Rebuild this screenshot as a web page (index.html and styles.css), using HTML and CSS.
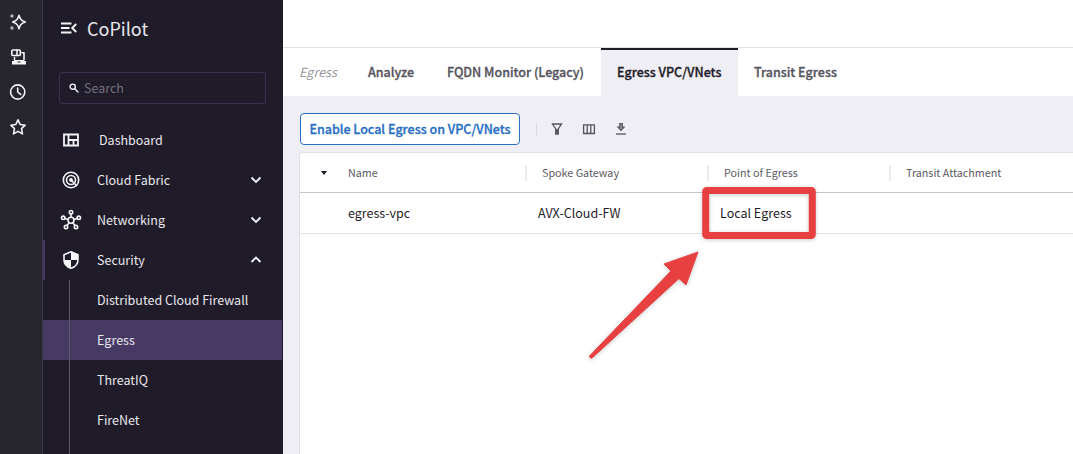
FILE: index.html
```html
<!DOCTYPE html>
<html lang="en">
<head>
<meta charset="utf-8">
<title>CoPilot</title>
<link rel="stylesheet" href="styles.css">
</head>
<body>
<div class="app">
  <aside class="rail">
    <svg class="rail-icon" viewBox="0 0 18 18"><path d="M10 2.200C11 6.200 12.200 7.500 16.300 9 12.200 10.500 11 11.800 10 15.800 9 11.800 7.800 10.500 3.700 9 7.800 7.500 9 6.200 10 2.200Z" class="line heavy"/><circle cx="3" cy="3" r="1.700" class="dot"/><circle cx="3" cy="15" r="1.700" class="dot"/></svg>
    <svg class="rail-icon" viewBox="0 0 18 18"><rect x="2.800" y="2" width="8.500" height="5.500" rx="1" class="line heavy"/><path d="M8 2v5.500" class="line heavy"/><path d="M13 4.800h2v7.200M5.500 9.500v2.500" class="line heavy"/><path d="M3 13h14v3.500H3z" class="solid"/><path d="M5.500 12h9.500v1H5.500z" class="solid"/><path d="M8.500 13.500h3v1h-3z" fill="#27252e"/></svg>
    <svg class="rail-icon" viewBox="0 0 18 18"><circle cx="8.700" cy="9" r="7.100" class="line heavy"/><path d="M8.700 5V9l3 2.400" class="line heavy"/></svg>
    <svg class="rail-icon" viewBox="0 0 18 18"><path d="M9 1.800l2.200 4.700 5 .7-3.700 3.500 1 5.200L9 13.400l-4.500 2.500 1-5.200L1.800 7.200l5-.7z" class="line heavy"/></svg>
  </aside>
  <nav class="sidebar">
    <header class="brand"><svg viewBox="0 0 16 12"><path d="M0 1.500h10.500M0 6h8.500M0 10.500h10.500M15.200 2l-4 4 4 4" class="line brandline"/></svg><span>CoPilot</span></header>
    <div class="search"><svg viewBox="0 0 10 10"><circle cx="3.700" cy="3.700" r="2.600" class="line"/><path d="M5.800 5.800l3.200 3.200" class="line"/></svg><span>Search</span></div>
    <ul class="menu">
      <li class="item dash"><svg class="mi" viewBox="0 0 20 20"><path d="M3 4.500h14v11H3zM7.500 4.500v11M7.500 10H17M12.500 10v5.500" class="line thick"/></svg><span>Dashboard</span></li>
      <li class="item"><svg class="mi" viewBox="0 0 20 20"><circle cx="10" cy="10" r="7.700" class="line heavy"/><circle cx="10" cy="10" r="4.500" class="line heavy"/><circle cx="10" cy="10" r="1.900" class="solid"/><path d="M10 10l5.500 5.500" class="line heavy"/></svg><span>Cloud Fabric</span><svg class="chev" viewBox="0 0 12 8"><path d="M1.500 1.500L6 6l4.500-4.500" class="line thick"/></svg></li>
      <li class="item"><svg class="mi" viewBox="0 0 20 20"><g class="line heavy"><circle cx="10" cy="10.300" r="3"/><circle cx="10" cy="2.200" r="1.700"/><circle cx="2.200" cy="7.800" r="1.700"/><circle cx="17.800" cy="7.800" r="1.700"/><circle cx="5" cy="17" r="1.700"/><circle cx="15" cy="17" r="1.700"/><path d="M10 4v3.200M4 8.400l3.100 1M16 8.400l-3.100 1M6 15.500l2.200-2.800M14 15.500l-2.200-2.800"/></g></svg><span>Networking</span><svg class="chev" viewBox="0 0 12 8"><path d="M1.500 1.500L6 6l4.500-4.500" class="line thick"/></svg></li>
      <li class="item open"><svg class="mi" viewBox="0 0 20 20"><path d="M10 1.700l7 3v5c0 4-3 7.200-7 8.600-4-1.400-7-4.600-7-8.600v-5z" class="line heavy"/><path d="M10 2v8h7V4.900zM10 10H3c.4 4 3 7 7 8.300z" class="solid"/></svg><span>Security</span><svg class="chev" viewBox="0 0 12 8"><path d="M1.500 6L6 1.500 10.500 6" class="line thick"/></svg></li>
    </ul>
    <ul class="submenu">
      <li>Distributed Cloud Firewall</li><li class="current">Egress</li><li>ThreatIQ</li><li>FireNet</li><li class="tail"></li>
    </ul>
  </nav>
  <main class="main">
    <div class="topbar"></div>
    <div class="tabs"><span class="section">Egress</span><span class="tab t1">Analyze</span><span class="tab t2">FQDN Monitor (Legacy)</span><span class="tab active">Egress VPC/VNets</span><span class="tab t4">Transit Egress</span></div>
    <div class="content">
      <div class="toolbar">
        <button class="primary">Enable Local Egress on VPC/VNets</button>
        <i class="divider"></i>
        <svg viewBox="0 0 14 14"><path d="M2.500 2h9L8.300 7v5H5.700V7z" class="tool"/><path d="M5.700 7.200h2.600V12H5.700z" class="toolfill"/></svg>
        <svg viewBox="0 0 14 14"><path d="M1.600 2.800h10.800v8.700H1.600zM5.200 3v8.500M8.800 3v8.500" class="tool"/></svg>
        <svg viewBox="0 0 14 14"><path d="M5.800 1.600h2.400v3.600h1.700L7 8.200 4.100 5.200h1.700z" class="tool arrowhead"/><path d="M2 12h10" class="tool"/></svg>
      </div>
      <div class="table">
        <div class="row head"><span class="sort"><i></i></span><span class="c1">Name</span><span class="c">Spoke Gateway</span><span class="c">Point of Egress</span><span class="c">Transit Attachment</span></div>
        <div class="row body"><span class="sort"></span><span class="c1">egress-vpc</span><span class="c">AVX-Cloud-FW</span><span class="c">Local Egress</span><span class="c"></span></div>
      </div>
    </div>
  </main>
</div>
<svg class="annotation" viewBox="0 0 1073 454"><rect x="705.700" y="190.500" width="106.600" height="45" rx="1"/><path class="arrow" d="M698 252L686 285 679 278.500 592 358Q590 359 589.500 356L671 271 664 264Z"/></svg>
</body>
</html>
```
FILE: styles.css
```css
* { box-sizing: border-box; }
body { margin: 0; overflow: hidden; font: 12.5px/20px "Noto Sans CJK SC", "Noto Sans", sans-serif; color: #1f1b29; }
ul { margin: 0; padding: 0; list-style: none; }
svg { display: block; flex: none; }
.line { fill: none; stroke: #f4f3f6; stroke-width: 1.4; stroke-linejoin: round; stroke-linecap: round; }
.heavy { stroke-width: 1.6; }
.thick { stroke-width: 1.8; stroke-linejoin: miter; stroke-linecap: butt; }
.brandline { stroke-width: 1.9; stroke-linejoin: miter; stroke-linecap: butt; }
.solid { fill: #f8f8fa; }
.dot { fill: #b4b3b9; }
.app { display: flex; height: 454px; overflow: hidden; }
.rail { width: 43px; background: #27252e; border-right: 1px solid #3a3841; padding: 13px 0 0 9px; display: flex; flex-direction: column; gap: 17px; }
.rail-icon { width: 18px; height: 18px; }
.sidebar { width: 240px; background: #1f1b29; color: #e8e7eb; }
.brand { display: flex; align-items: center; gap: 10px; height: 56px; padding-left: 18px; font-size: 18px; }
.brand svg { width: 16px; height: 12px; }
.search { margin: 16px 17px 0 16px; height: 32px; border: 1px solid #37314e; border-radius: 3px; display: flex; align-items: center; padding-left: 9px; gap: 5px; color: #73707c; }
.search svg { width: 10px; height: 10px; }
.menu { margin-top: 16px; }
.item { display: flex; align-items: center; height: 40px; padding-left: 18px; gap: 16px; }
.item.dash { gap: 18px; }
.item.open { border-left: 2px solid #463a64; padding-left: 16px; }
.mi { width: 20px; height: 20px; overflow: visible; }
.chev { width: 12px; height: 8px; margin: 0 21px 0 auto; }
.submenu li { height: 40px; line-height: 40px; padding-left: 54px; margin-right: 1px; background: linear-gradient(#5e5b67, #5e5b67) 26px 0 / 1px 100% no-repeat; }
.submenu .current { background-color: #463a64; }
.submenu .tail { height: 14px; }
.main { flex: 1; min-width: 0; background: #efeef4; }
.topbar { height: 48px; background: #fff; border-bottom: 1px solid #e2e1e5; }
.tabs { display: flex; height: 48px; line-height: 48px; background: #fff; padding-left: 16px; font-weight: 500; color: #56545e; }
.section { width: 53px; font-style: italic; font-weight: 400; color: #96959b; }
.tab { padding: 0 16px; white-space: nowrap; -webkit-text-stroke: .3px; }
.t1 { width: 79px; }
.t2 { width: 170px; }
.tab.active { width: 137px; background: #efeef4; color: #1f1b29; box-shadow: inset 0 2px #1f1b29; }
.content { padding: 17px 0 0 16px; }
.toolbar { display: flex; align-items: center; height: 32px; gap: 18px; padding-left: 1px; }
.primary { width: 220px; height: 32px; padding: 0; font: 500 12.5px/20px "Noto Sans CJK SC", "Noto Sans", sans-serif; -webkit-text-stroke: .3px; color: #2a6fc5; background: #fff; border: 1px solid #2a6fc5; border-radius: 4px; white-space: nowrap; }
.toolbar svg { width: 14px; height: 14px; }
.divider { width: 1px; height: 12px; background: #dad9df; margin: 0 -5px 0 -2px; }
.tool { fill: none; stroke: #56545e; stroke-width: 1.3; }
.arrowhead { fill: #aaa8b0; }
.toolfill { fill: #56545e; }
.table { margin-top: 7px; height: 302px; background: #fff; border: 1px solid #e0dfe5; border-right: 0; border-bottom: 0; border-top-left-radius: 4px; }
.row { display: grid; grid-template-columns: 48px 177px 182px 182px 182px; height: 41px; align-items: center; border-bottom: 1px solid #e2e1e6; white-space: nowrap; }
.head { height: 40px; border-color: #c6c3ce; font-size: 10.75px; color: #5c5a64; }
.head .c { border-left: 2px solid #ebeaf0; height: 16px; line-height: 15px; padding-left: 15px; }
.head .c1 { height: 16px; line-height: 15px; }
.body .c { padding-left: 13px; }
.sort i { display: block; width: 6px; margin-left: 21px; border: 3px solid transparent; border-top: 4px solid #1f1b29; border-bottom: 0; }
.annotation { position: absolute; left: 0; top: 0; width: 1073px; height: 454px; pointer-events: none; filter: drop-shadow(0 1px 2px #0003); }
.annotation rect { fill: none; stroke: #e84040; stroke-width: 7; stroke-linejoin: round; }
.arrow { fill: #e84040; stroke: #e84040; stroke-width: 1; stroke-linejoin: round; }
```
